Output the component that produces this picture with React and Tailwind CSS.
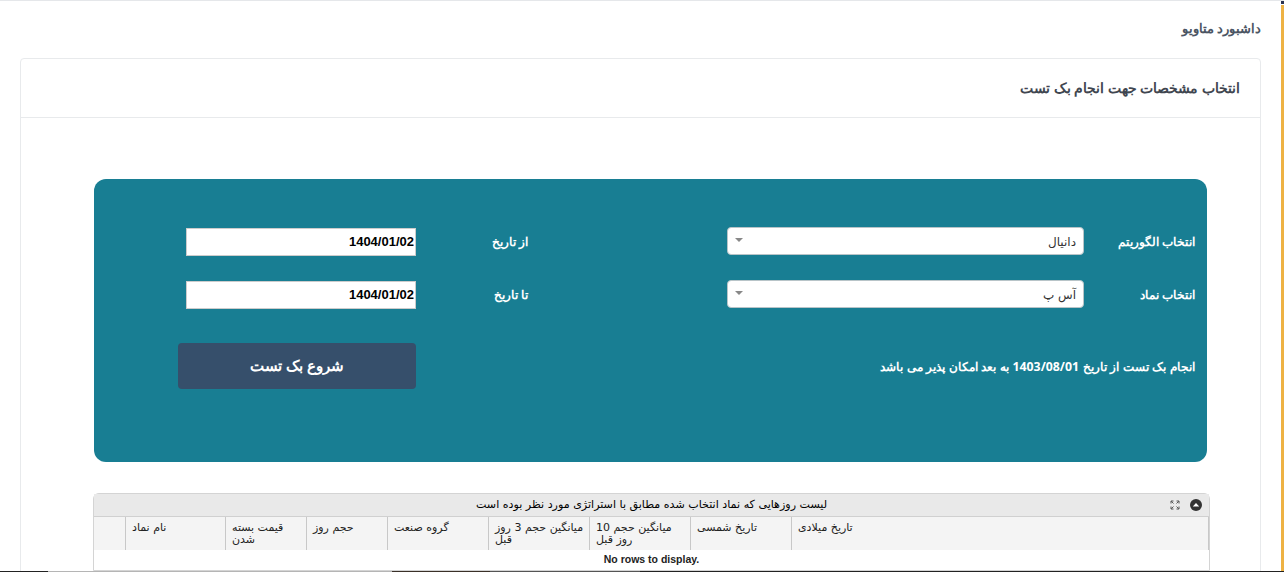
const fa = { fontFamily: '"Noto Sans", "Open Sans", sans-serif' };

function SelectBox({ value }) {
  return (
    <div className="flex h-[28px] w-[357px] items-center justify-between rounded-[4px] border border-[#b8c4c8] bg-white pl-[7px] pr-[7px] font-['DejaVu_Sans'] text-[12px] text-[#333]" dir="ltr">
      <span className="mb-[2px] h-0 w-0 border-x-[4px] border-t-[4px] border-x-transparent border-t-[#888]" />
      <span className="mt-[2px]" dir="rtl">{value}</span>
    </div>
  );
}

function DateBox() {
  return (
    <div className="mt-[1px] flex h-[28px] w-[230px] items-center justify-end border border-[#ccc] bg-white pr-[1px] font-['Liberation_Sans'] text-[13px] font-bold text-black">
      1404/01/02
    </div>
  );
}

const cols = [
  ["w-[32px]", ""],
  ["w-[100px]", "نام نماد"],
  ["w-[81px]", "قیمت بسته شدن"],
  ["w-[81px]", "حجم روز"],
  ["w-[101px]", "گروه صنعت"],
  ["w-[101px]", "میانگین حجم 3 روز قبل"],
  ["w-[101px]", "میانگین حجم 10 روز قبل"],
  ["w-[101px]", "تاریخ شمسی"],
  ["flex-1", "تاریخ میلادی"],
];

export default function App() {
  return (
    <div className="relative h-[572px] w-[1284px] overflow-hidden border-t border-[#e5e7ea] bg-white" style={fa}>
      <div className="absolute right-0 top-0 h-[3px] w-[3px] bg-[#2b3350]" />
      <div className="absolute right-0 top-[4px] h-full w-[3px] bg-[#eeb244]" />
      <div className="flex h-[57px] items-center justify-end pb-[2px] pr-[23px]" dir="ltr">
        <h1 className="text-[13px] font-bold text-[#4b5563]" dir="rtl">داشبورد متاویو</h1>
      </div>
      <div className="mx-[23px] ml-[20px] h-[600px] rounded-t-[4px] border border-[#e8eaec] bg-white">
        <div className="flex h-[59px] items-center justify-end border-b border-[#e8eaec] pr-[20px]">
          <h2 className="text-[13.8px] font-bold text-[#3f4650]" dir="rtl">انتخاب مشخصات جهت انجام بک تست</h2>
        </div>
        <div className="pl-[73px] pr-[53px] pt-[61px]">
          <div className="h-[283px] rounded-[12px] bg-[#187e93] pt-[48px]">
            <div className="flex h-[28px] items-center pl-[92px]">
              <DateBox />
              <span className="mt-[2px] w-[112px] text-right text-[12px] font-bold text-white" dir="rtl">از تاریخ</span>
              <div className="ml-[199px]"><SelectBox value="دانیال" /></div>
              <span className="mt-[2px] flex-1 pr-[12px] text-right text-[12px] font-bold text-white" dir="rtl">انتخاب الگوریتم</span>
            </div>
            <div className="mt-[25px] flex h-[28px] items-center pl-[92px]">
              <DateBox />
              <span className="mt-[2px] w-[112px] text-right text-[12px] font-bold text-white" dir="rtl">تا تاریخ</span>
              <div className="ml-[199px]"><SelectBox value="آس پ" /></div>
              <span className="mt-[2px] flex-1 pr-[12px] text-right text-[12px] font-bold text-white" dir="rtl">انتخاب نماد</span>
            </div>
            <div className="mt-[35px] flex items-center pl-[84px] pr-[12px]">
              <button className="flex h-[46px] w-[238px] items-center justify-center rounded-[4px] bg-[#364f6b] pb-[2px] text-[15px] font-bold text-white" dir="rtl">شروع بک تست</button>
              <p className="mt-[2px] flex-1 text-right text-[12.3px] font-bold text-white [word-spacing:0.4px]" dir="rtl">انجام بک تست از تاریخ 1403/08/01 به بعد امکان پذیر می باشد</p>
            </div>
          </div>
          <div className="-ml-[1px] -mr-[3px] mt-[31px] rounded-t-[6px] border border-[#d4d4d4] bg-white font-['DejaVu_Sans'] text-[#222]">
            <div className="relative flex h-[23px] items-center justify-center border-b border-[#d0d0d0] bg-[#e9e9e9] text-[11.1px] text-black" dir="rtl">
              لیست روزهایی که نماد انتخاب شده مطابق با استراتژی مورد نظر بوده است
              <div className="absolute right-[7px] top-[5px] flex items-center gap-[10px]" dir="ltr">
                <svg width="10" height="10" viewBox="0 0 10 10" fill="none" stroke="#555" strokeWidth="1">
                  <path d="M1 3.5V1h2.5M6.5 1H9v2.5M9 6.5V9H6.5M3.5 9H1V6.5M1.2 1.2l2.3 2.3M8.8 1.2L6.5 3.5M8.8 8.8L6.5 6.5M1.2 8.8l2.3-2.3" />
                </svg>
                <svg width="12" height="12" viewBox="0 0 12 12">
                  <circle cx="6" cy="6" r="6" fill="#333" />
                  <path d="M2.8 7.5L6 4l3.2 3.5z" fill="#fff" />
                </svg>
              </div>
            </div>
            <div className="flex h-[33px] bg-[#f4f4f4] text-[11px] leading-[12px]" dir="ltr">
              {cols.map(([w, label], i) => (
                <div key={i} className={`${w} border-r border-[#c8c8c8] pl-[6px] pr-[2px] pt-[5px]`} dir="rtl">
                  <span className="block text-left" dir="rtl">{label}</span>
                </div>
              ))}
            </div>
            <div className="flex h-[20px] items-center justify-center font-['Liberation_Sans'] text-[10.5px] font-bold">No rows to display.</div>
          </div>
        </div>
      </div>
      <div className="absolute bottom-0 left-0 flex h-[1px] w-full">
        <div className="w-[48px] bg-[#222]" />
        <div className="w-[344px] bg-[#b5b5b5]" />
        <div className="w-[98px] bg-[#3a3028]" />
        <div className="w-[150px] bg-[#555]" />
        <div className="flex-1 bg-[#222]" />
      </div>
    </div>
  );
}
